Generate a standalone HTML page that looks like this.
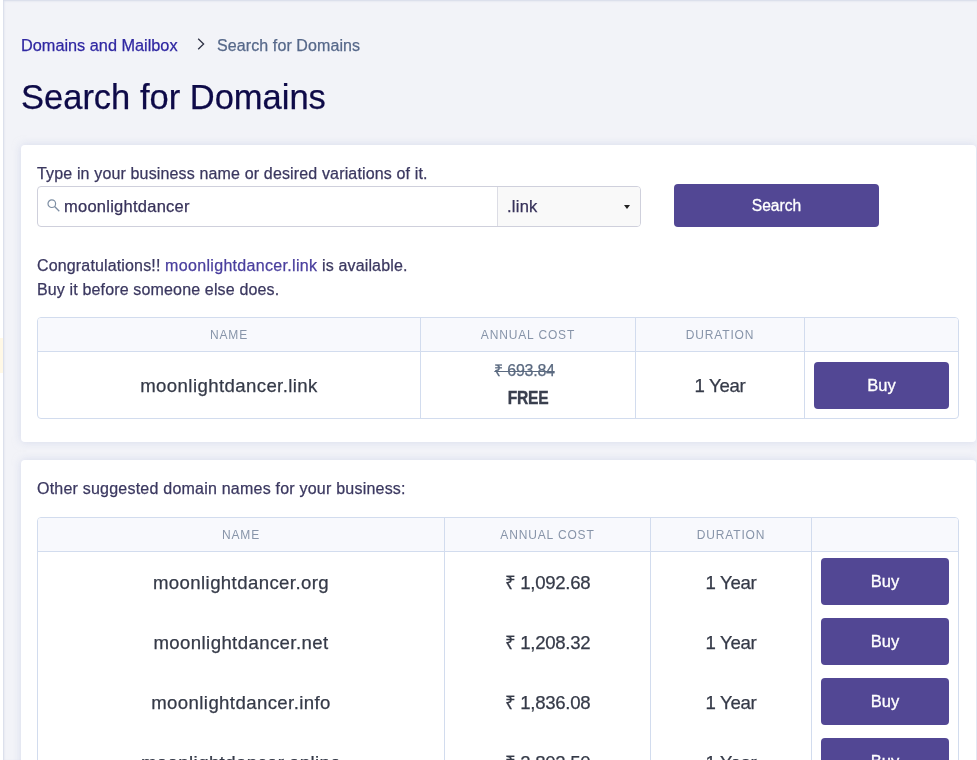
<!DOCTYPE html>
<html><head><meta charset="utf-8">
<style>
*{box-sizing:border-box;margin:0;padding:0}
html,body{width:977px;height:760px;overflow:hidden;background:#fff;font-family:"Liberation Sans",sans-serif}
body>div{will-change:transform}
.crumb,h1,.lbl,.txt,td{-webkit-text-stroke:0.25px currentColor}
.free{-webkit-text-stroke:0.4px currentColor}
#main{position:absolute;left:3px;top:0;width:974px;height:760px;background:#f2f3f8;box-shadow:inset 1px 1px 2px rgba(200,206,225,.7)}
#yel{position:absolute;left:0;top:338px;width:3px;height:35px;background:#fff8e6}
.crumb{position:absolute;top:37px;font-size:16px;white-space:nowrap}
.crumb.a{left:21px;color:#2f27a2}
.crumb.b{left:217px;color:#56688a}
.chev{position:absolute;left:196px;top:38px;width:8px;height:12px}
h1{position:absolute;left:21px;top:78px;font-size:34.5px;font-weight:normal;color:#0e0a48;white-space:nowrap}
.card{position:absolute;left:21px;width:955px;background:#fff;border-radius:4px;box-shadow:0 0 8px rgba(190,198,225,.55)}
#c1{top:145px;height:297px}
#c2{top:460px;height:320px}
.lbl{position:absolute;left:16px;font-size:16px;letter-spacing:0.15px;color:#3b3860;white-space:nowrap}
.inp{position:absolute;left:16px;top:41px;width:604px;height:41px;border:1px solid #cfd0dc;border-radius:4px;background:#fff}
.inp .sel{position:absolute;left:459px;top:0;width:143px;height:39px;background:#f9f9f9;border-left:1px solid #dcdde5;border-radius:0 3px 3px 0}
.inp .txt{position:absolute;left:26px;top:10px;font-size:16.5px;letter-spacing:0.25px;color:#37325a}
.sel .txt{left:9px;top:10px}
.caret{position:absolute;left:126px;top:18px;width:0;height:0;border-left:3.5px solid transparent;border-right:3.5px solid transparent;border-top:4px solid #222}
.btn{position:absolute;background:#524794;color:#fff;border-radius:4px;text-align:center;font-weight:normal;-webkit-text-stroke:0.3px #fff}
#sbtn{left:653px;top:39px;width:205px;height:43px;font-size:15.6px;line-height:43px;letter-spacing:0px}
table{position:absolute;left:16px;border-collapse:separate;border-spacing:0;border:1px solid #d2dcee;border-radius:4px}
th{height:34px;background:#f8f9fd;font-weight:normal;font-size:12px;letter-spacing:0.85px;color:#8794a9;border-bottom:1px solid #d2dcee;text-align:center}
th+th,td+td{border-left:1px solid #d2dcee}
td{text-align:center;font-size:18.6px;letter-spacing:0.4px;color:#353a48;position:relative;vertical-align:top;line-height:22px}
th:first-child{border-top-left-radius:3px}
th:last-child{border-top-right-radius:3px}
#t1{top:172px;width:922px}
#t1 td{height:66px;padding-top:23px}
td+td{letter-spacing:-0.3px}
#t2{top:57px;width:922px}
#t2 td{height:60px;padding-top:20px}
.bb{position:absolute;left:9px;right:9px;height:47px;line-height:47px;font-size:16.5px;letter-spacing:0px}
.strike{font-size:16px;letter-spacing:-0.25px;color:#5b6a80;text-decoration:line-through;margin-top:-15px;margin-left:-7px}
.free{font-weight:bold;font-size:18.6px;letter-spacing:-0.3px;color:#3a3f4e;margin-top:5px;transform:scaleX(.84)}
</style></head><body>
<div id="yel"></div>
<div id="main">
<div class="crumb a" style="left:18px;font-size:16.3px;top:36px">Domains and Mailbox</div>
<svg class="chev" style="left:194px" viewBox="0 0 8 12"><path d="M1.2 0.8 L6.6 6 L1.2 11.2" fill="none" stroke="#2e3145" stroke-width="1.3"/></svg>
<div class="crumb b" style="left:214px;letter-spacing:0.1px">Search for Domains</div>
<h1 style="left:18px">Search for Domains</h1>
</div>
<div class="card" id="c1">
 <div class="lbl" style="top:20px">Type in your business name or desired variations of it.</div>
 <div class="inp">
  <svg style="position:absolute;left:9px;top:12px" width="14" height="14" viewBox="0 0 14 14"><circle cx="4.8" cy="4.7" r="3.8" fill="none" stroke="#7d8ea3" stroke-width="1.2"/><path d="M7.6 7.5 L12.3 12.2" stroke="#7d8ea3" stroke-width="1.3"/></svg>
  <div class="txt">moonlightdancer</div>
  <div class="sel"><div class="txt">.link</div><div class="caret"></div></div>
 </div>
 <div class="btn" id="sbtn">Search</div>
 <div class="lbl" style="top:109px;line-height:24px">Congratulations!! <span style="color:#4a3f9e;letter-spacing:0.32px">moonlightdancer.link</span> is available.<br>Buy it before someone else does.</div>
 <table id="t1">
  <tr><th style="width:382px">NAME</th><th style="width:215px">ANNUAL COST</th><th style="width:169px">DURATION</th><th></th></tr>
  <tr><td>moonlightdancer.link</td><td><div class="strike">₹ 693.84</div><div class="free">FREE</div></td><td>1 Year</td><td><div class="btn bb" style="top:10px">Buy</div></td></tr>
 </table>
</div>
<div class="card" id="c2">
 <div class="lbl" style="top:20px;letter-spacing:0.22px">Other suggested domain names for your business:</div>
 <table id="t2">
  <tr><th style="width:406px">NAME</th><th style="width:206px">ANNUAL COST</th><th style="width:161px">DURATION</th><th></th></tr>
  <tr><td>moonlightdancer.org</td><td>₹ 1,092.68</td><td>1 Year</td><td><div class="btn bb" style="top:6px">Buy</div></td></tr>
  <tr><td>moonlightdancer.net</td><td>₹ 1,208.32</td><td>1 Year</td><td><div class="btn bb" style="top:6px">Buy</div></td></tr>
  <tr><td>moonlightdancer.info</td><td>₹ 1,836.08</td><td>1 Year</td><td><div class="btn bb" style="top:6px">Buy</div></td></tr>
  <tr><td>moonlightdancer.online</td><td>₹ 2,802.50</td><td>1 Year</td><td><div class="btn bb" style="top:6px">Buy</div></td></tr>
 </table>
</div>
</body></html>
